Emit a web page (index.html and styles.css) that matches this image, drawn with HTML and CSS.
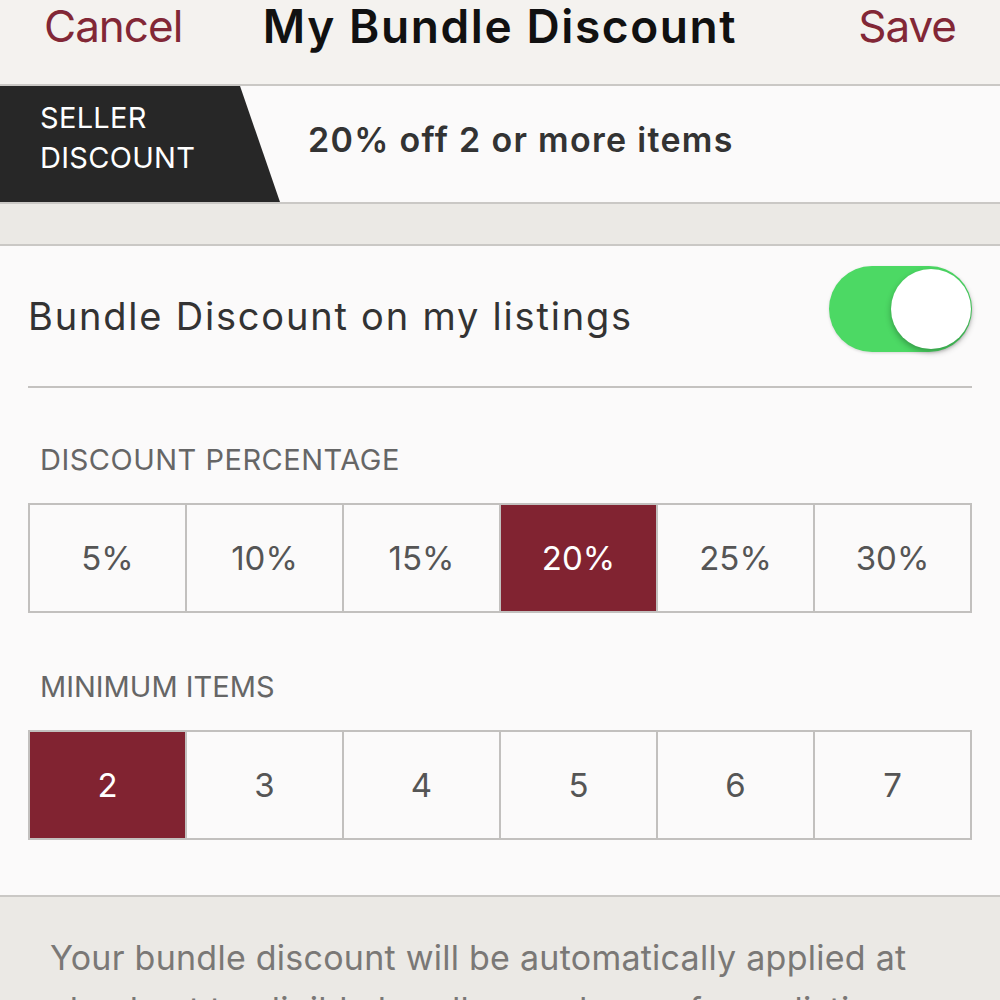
FILE: index.html
```html
<!DOCTYPE html>
<html>
<head>
    <title>My Bundle Discount</title>
    <link rel="stylesheet" href="styles.css">
</head>
<body>
    <div class="nav">
        <span class="nav-link">Cancel</span>
        <span class="nav-title">My Bundle Discount</span>
        <span class="nav-link nav-save">Save</span>
    </div>

    <div class="seller-bar">
        <div class="seller-badge">SELLER<br>DISCOUNT</div>
        <div class="seller-text">20% off 2 or more items</div>
    </div>

    <div class="spacer"></div>

    <div class="section">
        <div class="toggle-row">
            <span class="toggle-label">Bundle Discount on my listings</span>
            <div class="toggle"><div class="knob"></div></div>
        </div>

        <div class="group-label">DISCOUNT PERCENTAGE</div>
        <div class="options">
            <div class="option">5%</div>
            <div class="option">10%</div>
            <div class="option">15%</div>
            <div class="option selected">20%</div>
            <div class="option">25%</div>
            <div class="option">30%</div>
        </div>

        <div class="group-label second">MINIMUM ITEMS</div>
        <div class="options">
            <div class="option selected">2</div>
            <div class="option">3</div>
            <div class="option">4</div>
            <div class="option">5</div>
            <div class="option">6</div>
            <div class="option">7</div>
        </div>
    </div>

    <div class="footer">
        Your bundle discount will be automatically applied at checkout to eligible bundles made up of your listings.
    </div>
</body>
</html>
```

FILE: styles.css
```css
body {
    font-family: Inter, Lato, sans-serif;
    background-color: #ebe9e5;
    margin: 0;
    padding: 0;
    height: 1000px;
    overflow: hidden;
}

.nav {
    display: grid;
    grid-template-columns: 1fr auto 1fr;
    height: 80px;
    padding: 4px 44px 0;
    background-color: #f4f2ef;
    border-bottom: 2px solid #cac8c5;
    font-size: 46px;
    line-height: 44px;
}

.nav-link {
    color: #822736;
    font-size: 44px;
    letter-spacing: -1px;
}

.nav-save {
    text-align: right;
}

.nav-title {
    color: #111;
    font-weight: 600;
    letter-spacing: 1.6px;
}

.seller-bar {
    display: flex;
    align-items: center;
    height: 116px;
    background-color: #fbfafa;
    border-bottom: 2px solid #cac8c5;
}

.seller-badge {
    align-self: stretch;
    width: 280px;
    padding: 12px 0 0 40px;
    box-sizing: border-box;
    background-color: #272727;
    color: #fff;
    font-size: 29px;
    line-height: 40px;
    letter-spacing: 0.3px;
    clip-path: polygon(0 0, 240px 0, 100% 100%, 0 100%);
}

.seller-text {
    margin-left: 28px;
    padding-bottom: 9px;
    font-size: 34px;
    line-height: 40px;
    font-weight: 600;
    letter-spacing: 1.3px;
    color: #333;
}

.spacer {
    height: 40px;
    border-bottom: 2px solid #cac8c5;
}

.section {
    background-color: #fbfafa;
    padding: 0 28px 55px;
    border-bottom: 2px solid #cac8c5;
}

.toggle-row {
    display: flex;
    justify-content: space-between;
    align-items: center;
    height: 140px;
    border-bottom: 2px solid #c4c2c0;
}

.toggle-label {
    font-size: 38px;
    line-height: 44px;
    letter-spacing: 1.8px;
    color: #333;
}

.toggle {
    display: flex;
    justify-content: flex-end;
    align-items: center;
    width: 143px;
    height: 86px;
    margin-bottom: 14px;
    padding: 3px 1px;
    box-sizing: border-box;
    border-radius: 43px;
    background-color: #4cd964;
    box-shadow: 0 1px 3px rgba(0, 0, 0, 0.15);
}

.knob {
    width: 80px;
    height: 80px;
    border-radius: 50%;
    background-color: #fff;
    box-shadow: 0 3px 6px rgba(0, 0, 0, 0.3);
}

.group-label {
    margin: 54px 0 25px 12px;
    font-size: 29px;
    line-height: 36px;
    letter-spacing: 0.5px;
    color: #666;
}

.group-label.second {
    margin-top: 56px;
    letter-spacing: 0;
}

.options {
    display: grid;
    grid-template-columns: repeat(6, 1fr);
    border-top: 2px solid #c2c0be;
    border-left: 2px solid #c2c0be;
}

.option {
    display: flex;
    justify-content: center;
    align-items: center;
    height: 106px;
    border-right: 2px solid #c2c0be;
    border-bottom: 2px solid #c2c0be;
    font-size: 33px;
    color: #555;
}

.option.selected {
    background-color: #812331;
    color: #fff;
}

.footer {
    padding: 35px 50px 0;
    font-size: 34px;
    line-height: 52px;
    letter-spacing: 0.25px;
    color: #7a7876;
}
```
